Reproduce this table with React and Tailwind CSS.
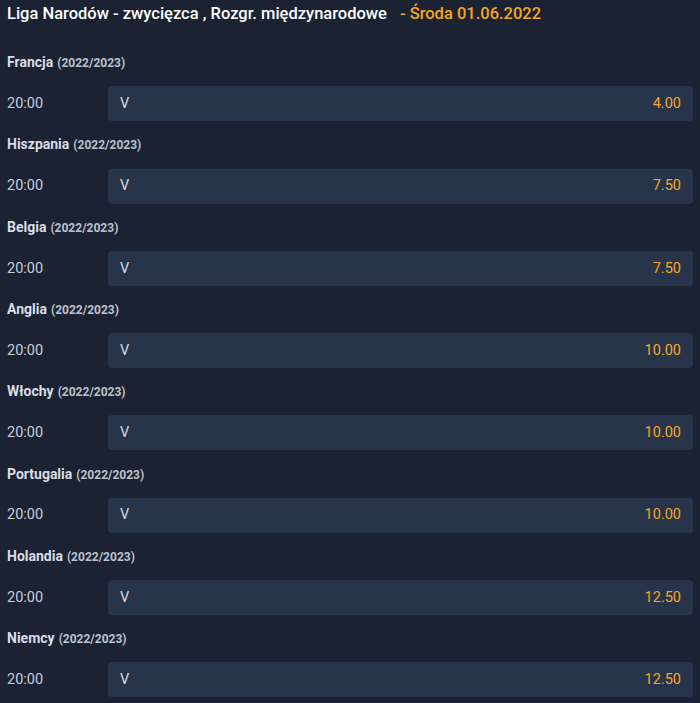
import React from 'react'

const events = [
  { team: 'Francja', odds: '4.00' },
  { team: 'Hiszpania', odds: '7.50' },
  { team: 'Belgia', odds: '7.50' },
  { team: 'Anglia', odds: '10.00' },
  { team: 'Włochy', odds: '10.00' },
  { team: 'Portugalia', odds: '10.00' },
  { team: 'Holandia', odds: '12.50' },
  { team: 'Niemcy', odds: '12.50' }
]

const App = () => {
  return (
    <div className="w-[700px] h-[703px] overflow-hidden bg-[#1b2232] font-['Roboto',sans-serif]">
      <div className="h-[39px] px-[7px] pt-[4px] flex items-start">
        <h1 className="text-[16.5px] leading-[20px] font-medium text-white m-0">
          Liga Narodów - zwycięzca , Rozgr. międzynarodowe
          <span className="ml-[13px] text-[#f5a623]">- Środa 01.06.2022</span>
        </h1>
      </div>

      {events.map((ev) => (
        <div key={ev.team}>
          <div className="h-[47.3px] px-[7px] flex items-center">
            <div className="flex items-baseline">
              <span className="text-[14px] font-bold text-[#d9dde5]">{ev.team}</span>
              <span className="ml-[4px] text-[12px] font-bold text-[#bcc2cc]">(2022/2023)</span>
            </div>
          </div>
          <div className="flex items-center h-[35px] pl-[7px] pr-[7px]">
            <div className="w-[101px] text-[14.5px] text-[#c9ced8]">20:00</div>
            <div className="flex-1 h-full rounded-[4px] bg-[#28344a] flex items-center justify-between pl-[12px] pr-[12px] text-[14.5px]">
              <span className="text-[#d6dbe3]">V</span>
              <span className="text-[#f5a623]">{ev.odds}</span>
            </div>
          </div>
        </div>
      ))}
    </div>
  )
}

export default App
